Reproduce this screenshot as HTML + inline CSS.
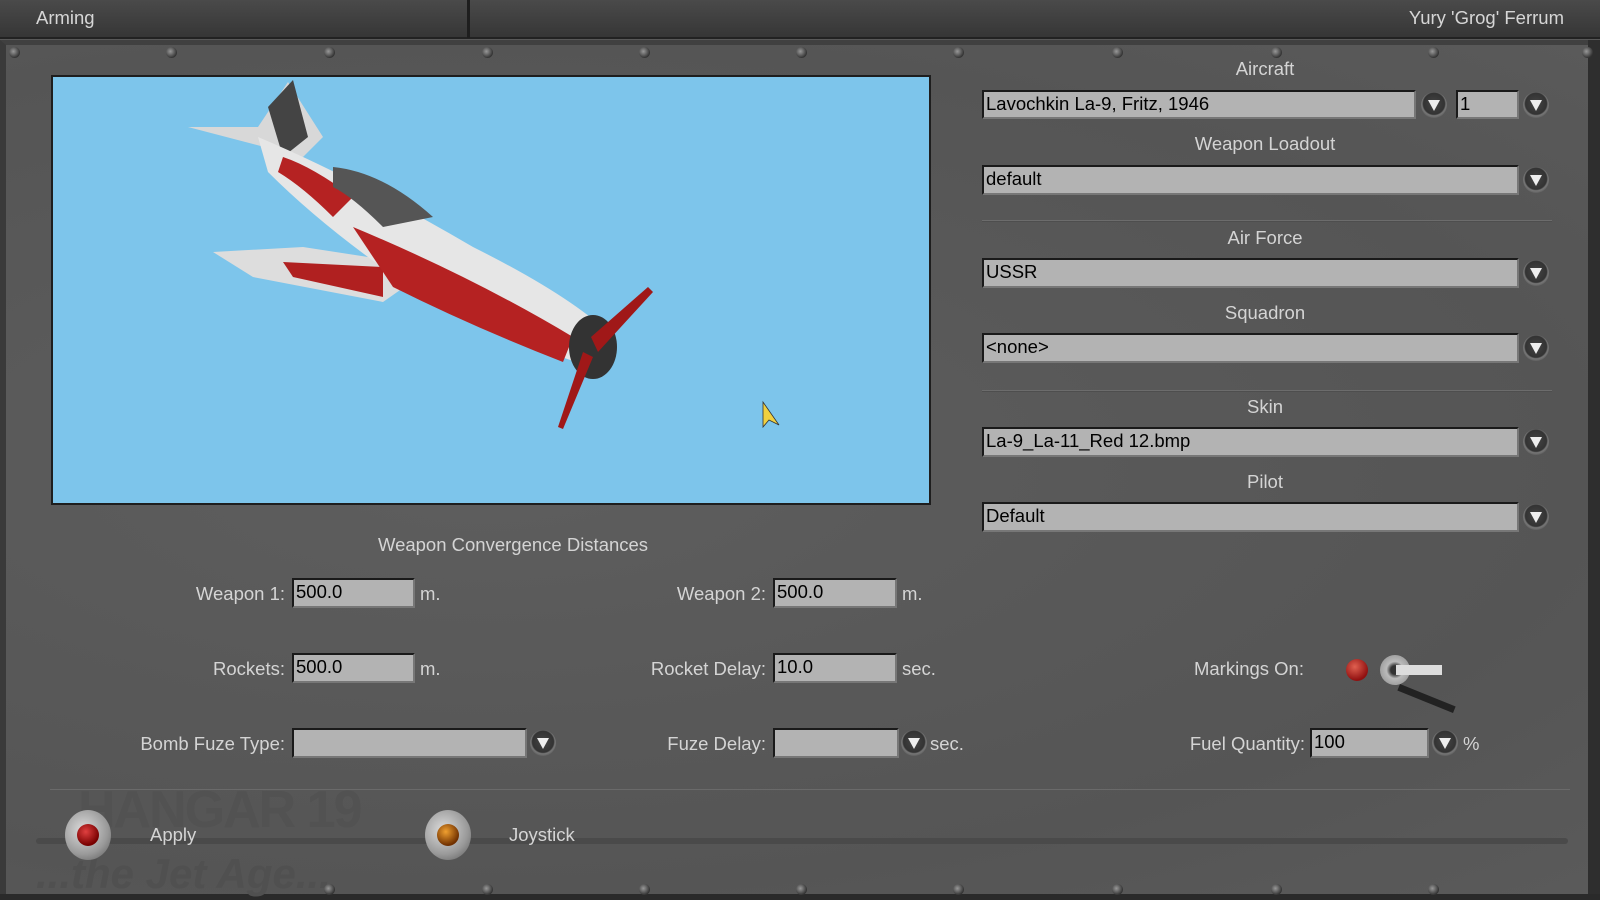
<!DOCTYPE html>
<html><head><meta charset="utf-8">
<style>
*{margin:0;padding:0;box-sizing:border-box}
body{width:1600px;height:900px;overflow:hidden;background:#585858;font-family:"Liberation Sans",sans-serif;position:relative}
.top{position:absolute;left:0;top:0;width:1600px;height:39px;background:linear-gradient(#4a4a4a,#363636);border-bottom:2px solid #222}
.top .div{position:absolute;left:467px;top:0;width:3px;height:38px;background:#1e1e1e}
.t{position:absolute;color:#d6d6d6;font-size:18.5px;white-space:nowrap}
.panel{position:absolute;left:0;top:40px;width:1600px;height:860px;background:radial-gradient(ellipse at 480px 420px,#5e5e5e 0,#585858 45%,#555 70%,#5a5a5a 100%);border:6px solid #3a3a3a;border-top:5px solid #404040}
.edge{position:absolute;right:0;top:40px;width:12px;height:860px;background:#2e2e2e}
.bot{position:absolute;left:0;top:894px;width:1600px;height:6px;background:#2a2a2a}
.blue{position:absolute;left:51px;top:75px;width:880px;height:430px;background:#7dc5eb;border:2px solid #1e1e1e}
.lbl{position:absolute;color:#d4d4d4;font-size:18.5px;white-space:nowrap}
.c{transform:translateX(-50%)}
.r{transform:translateX(-100%)}
.f{position:absolute;background:#b3b3b3;border:2px solid #1a1a1a;border-right-color:#777;border-bottom-color:#777;color:#000;font-size:18.5px;padding-left:2px;line-height:24px;white-space:nowrap}
.dd{position:absolute;width:26px;height:26px;border-radius:50%;background:radial-gradient(circle at 50% 45%,#444 0,#333 55%,#777 62%,#555 80%,#444 100%)}
.dd:after{content:"";position:absolute;left:7px;top:8px;border-left:6px solid transparent;border-right:6px solid transparent;border-top:11px solid #eee}
.sep{position:absolute;left:982px;width:570px;height:2px;background:#6c6c6c;border-bottom:1px solid #4e4e4e}
.bolt{position:absolute;width:11px;height:11px;border-radius:50%;background:radial-gradient(circle at 40% 40%,#999,#333 70%)}
.btn{position:absolute;width:46px;height:50px;border-radius:50%;background:radial-gradient(circle at 40% 40%,#ddd,#999 60%,#555)}
.btn i{position:absolute;left:12px;top:14px;width:22px;height:22px;border-radius:50%}
</style></head><body>
<div class="top"><div class="div"></div></div>
<div class="t" style="left:36px;top:7px">Arming</div>
<div class="t" style="right:36px;top:7px">Yury 'Grog' Ferrum</div>
<div class="panel"></div>
<div class="edge"></div>
<div class="bot"></div>
<div style="position:absolute;left:36px;top:838px;width:1532px;height:6px;background:#4a4a4a;border-radius:3px"></div>
<div style="position:absolute;left:50px;top:789px;width:1520px;height:1px;background:#6a6a6a"></div>
<div style="position:absolute;left:36px;top:850px;color:#505050;font:italic bold 42px 'Liberation Sans',sans-serif">...the Jet Age...</div>
<div style="position:absolute;left:78px;top:780px;color:#525252;font:bold 52px 'Liberation Sans',sans-serif;letter-spacing:-2px">HANGAR 19</div>

<div class="bolt" style="left:9px;top:47px"></div><div class="bolt" style="left:166px;top:47px"></div><div class="bolt" style="left:324px;top:47px"></div><div class="bolt" style="left:482px;top:47px"></div><div class="bolt" style="left:639px;top:47px"></div><div class="bolt" style="left:796px;top:47px"></div><div class="bolt" style="left:953px;top:47px"></div><div class="bolt" style="left:1112px;top:47px"></div><div class="bolt" style="left:1271px;top:47px"></div><div class="bolt" style="left:1428px;top:47px"></div><div class="bolt" style="left:1582px;top:47px"></div>
<div class="bolt" style="left:324px;top:884px"></div><div class="bolt" style="left:482px;top:884px"></div><div class="bolt" style="left:639px;top:884px"></div><div class="bolt" style="left:796px;top:884px"></div><div class="bolt" style="left:953px;top:884px"></div><div class="bolt" style="left:1112px;top:884px"></div><div class="bolt" style="left:1271px;top:884px"></div><div class="bolt" style="left:1428px;top:884px"></div>

<div class="blue">
<svg width="876" height="426" viewBox="0 0 876 426">
<polygon points="135,50 250,80 270,60 235,5 205,50" fill="#d8d8d8"/>
<polygon points="215,30 240,3 255,60 230,80" fill="#444"/>
<polygon points="160,175 250,170 380,190 330,225 200,200" fill="#ddd"/>
<polygon points="230,185 330,190 330,220 240,200" fill="#b02020"/>
<path d="M205,60 Q300,100 420,170 Q520,220 560,260 L540,290 Q470,270 380,225 Q280,160 215,95 Z" fill="#e6e6e6"/>
<path d="M300,150 Q420,200 520,260 L510,285 Q420,250 340,210 Z" fill="#b52222"/>
<path d="M230,80 Q260,90 300,120 L280,140 Q250,110 225,95Z" fill="#b52222"/>
<path d="M280,90 Q330,95 380,140 L330,150 Q300,120 280,110Z" fill="#555"/>
<ellipse cx="540" cy="270" rx="24" ry="32" fill="#333"/>
<polygon points="538,260 595,210 600,215 545,275" fill="#a01818"/>
<polygon points="530,275 505,350 510,352 540,280" fill="#a01818"/>
<polygon points="710,325 710,350 716,343 726,348" fill="#f0d040" stroke="#333" stroke-width="0.8"/>
</svg>
</div>

<div class="lbl c" style="left:1265px;top:58px">Aircraft</div>
<div class="f" style="left:982px;top:90px;width:434px;height:29px">Lavochkin La-9, Fritz, 1946</div>
<div class="dd" style="left:1421px;top:92px"></div>
<div class="f" style="left:1456px;top:90px;width:63px;height:29px">1</div>
<div class="dd" style="left:1523px;top:92px"></div>
<div class="lbl c" style="left:1265px;top:133px">Weapon Loadout</div>
<div class="f" style="left:982px;top:165px;width:537px;height:30px">default</div>
<div class="dd" style="left:1523px;top:167px"></div>
<div class="sep" style="top:220px"></div>
<div class="lbl c" style="left:1265px;top:227px">Air Force</div>
<div class="f" style="left:982px;top:258px;width:537px;height:30px">USSR</div>
<div class="dd" style="left:1523px;top:260px"></div>
<div class="lbl c" style="left:1265px;top:302px">Squadron</div>
<div class="f" style="left:982px;top:333px;width:537px;height:30px">&lt;none&gt;</div>
<div class="dd" style="left:1523px;top:335px"></div>
<div class="sep" style="top:390px"></div>
<div class="lbl c" style="left:1265px;top:396px">Skin</div>
<div class="f" style="left:982px;top:427px;width:537px;height:30px">La-9_La-11_Red 12.bmp</div>
<div class="dd" style="left:1523px;top:429px"></div>
<div class="lbl c" style="left:1265px;top:471px">Pilot</div>
<div class="f" style="left:982px;top:502px;width:537px;height:30px">Default</div>
<div class="dd" style="left:1523px;top:504px"></div>

<div class="lbl c" style="left:513px;top:534px">Weapon Convergence Distances</div>
<div class="lbl r" style="left:285px;top:583px">Weapon 1:</div>
<div class="f" style="left:292px;top:578px;width:123px;height:30px">500.0</div>
<div class="lbl" style="left:420px;top:583px">m.</div>
<div class="lbl r" style="left:766px;top:583px">Weapon 2:</div>
<div class="f" style="left:773px;top:578px;width:124px;height:30px">500.0</div>
<div class="lbl" style="left:902px;top:583px">m.</div>

<div class="lbl r" style="left:285px;top:658px">Rockets:</div>
<div class="f" style="left:292px;top:653px;width:123px;height:30px">500.0</div>
<div class="lbl" style="left:420px;top:658px">m.</div>
<div class="lbl r" style="left:766px;top:658px">Rocket Delay:</div>
<div class="f" style="left:773px;top:653px;width:124px;height:30px">10.0</div>
<div class="lbl" style="left:902px;top:658px">sec.</div>
<div class="lbl r" style="left:1304px;top:658px">Markings On:</div>
<div style="position:absolute;left:1346px;top:659px;width:22px;height:22px;border-radius:50%;background:radial-gradient(circle at 40% 35%,#e06050,#901010 70%)"></div>
<div style="position:absolute;left:1380px;top:655px;width:30px;height:30px;border-radius:50%;background:radial-gradient(circle,#333 20%,#bbb 40%,#888)"></div>
<div style="position:absolute;left:1396px;top:665px;width:46px;height:10px;background:#ddd"></div>
<div style="position:absolute;left:1400px;top:684px;width:60px;height:7px;background:#222;transform:rotate(22deg);transform-origin:0 0"></div>

<div class="lbl r" style="left:285px;top:733px">Bomb Fuze Type:</div>
<div class="f" style="left:292px;top:728px;width:235px;height:30px"></div>
<div class="dd" style="left:530px;top:730px"></div>
<div class="lbl r" style="left:766px;top:733px">Fuze Delay:</div>
<div class="f" style="left:773px;top:728px;width:126px;height:30px"></div>
<div class="dd" style="left:901px;top:730px"></div>
<div class="lbl" style="left:930px;top:733px">sec.</div>
<div class="lbl r" style="left:1305px;top:733px">Fuel Quantity:</div>
<div class="f" style="left:1310px;top:728px;width:119px;height:30px">100</div>
<div class="dd" style="left:1432px;top:730px"></div>
<div class="lbl" style="left:1463px;top:733px">%</div>

<div class="btn" style="left:65px;top:810px"><i style="background:radial-gradient(circle at 40% 35%,#e04040,#700 70%)"></i></div>
<div class="lbl" style="left:150px;top:824px">Apply</div>
<div class="btn" style="left:425px;top:810px"><i style="background:radial-gradient(circle at 40% 35%,#f0a030,#703000 70%)"></i></div>
<div class="lbl" style="left:509px;top:824px">Joystick</div>
</body></html>
